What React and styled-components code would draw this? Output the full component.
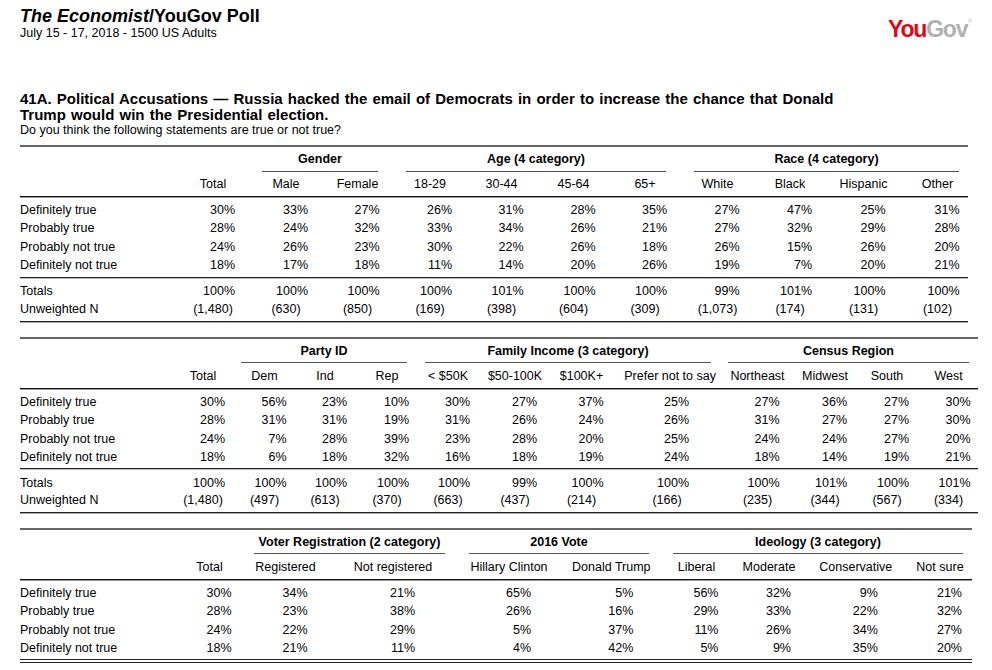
import React from "react";
import styled, { createGlobalStyle } from "styled-components";

const GlobalStyle = createGlobalStyle`
  html, body {
    margin: 0;
    padding: 0;
    background: #fff;
  }
  body {
    font-family: "Liberation Sans", Arial, Helvetica, sans-serif;
    color: #000;
  }
`;

const LEFT = 20;
const ROW_LABELS = ["Definitely true", "Probably true", "Probably not true", "Definitely not true"];

// column centres and rule extents measured from the printed poll
const TABLES = [
  {
    right: 968,
    mt: 8.5,
    cols: [
      ["Total", 213], ["Male", 286], ["Female", 357.5], ["18-29", 430], ["30-44", 501.5],
      ["45-64", 573.5], ["65+", 645], ["White", 717.5], ["Black", 790], ["Hispanic", 863.5], ["Other", 937.5],
    ],
    groups: [
      { label: "Gender", span: 2, x1: 262, x2: 378 },
      { label: "Age (4 category)", span: 4, x1: 406, x2: 666 },
      { label: "Race (4 category)", span: 4, x1: 694, x2: 959 },
    ],
    data: [
      [30, 33, 27, 26, 31, 28, 35, 27, 47, 25, 31],
      [28, 24, 32, 33, 34, 26, 21, 27, 32, 29, 28],
      [24, 26, 23, 30, 22, 26, 18, 26, 15, 26, 20],
      [18, 17, 18, 11, 14, 20, 26, 19, 7, 20, 21],
    ],
    totals: [100, 100, 100, 100, 101, 100, 100, 99, 101, 100, 100],
    n: ["1,480", "630", "850", "169", "398", "604", "309", "1,073", "174", "131", "102"],
  },
  {
    right: 978,
    mt: 14,
    cols: [
      ["Total", 203], ["Dem", 264.5], ["Ind", 325], ["Rep", 387], ["< $50K", 448], ["$50-100K", 515],
      ["$100K+", 581.5], ["Prefer not to say", 667], ["Northeast", 757.5], ["Midwest", 825], ["South", 887], ["West", 948.5],
    ],
    groups: [
      { label: "Party ID", span: 3, x1: 241, x2: 407 },
      { label: "Family Income (3 category)", span: 4, x1: 425, x2: 711 },
      { label: "Census Region", span: 4, x1: 728, x2: 969 },
    ],
    data: [
      [30, 56, 23, 10, 30, 27, 37, 25, 27, 36, 27, 30],
      [28, 31, 31, 19, 31, 26, 24, 26, 31, 27, 27, 30],
      [24, 7, 28, 39, 23, 28, 20, 25, 24, 24, 27, 20],
      [18, 6, 18, 32, 16, 18, 19, 24, 18, 14, 19, 21],
    ],
    totals: [100, 100, 100, 100, 100, 99, 100, 100, 100, 101, 100, 101],
    n: ["1,480", "497", "613", "370", "663", "437", "214", "166", "235", "344", "567", "334"],
  },
  {
    right: 972,
    mt: 13.5,
    cols: [
      ["Total", 209.5], ["Registered", 285.5], ["Not registered", 393], ["Hillary Clinton", 509],
      ["Donald Trump", 611.3], ["Liberal", 696.5], ["Moderate", 769], ["Conservative", 855.8], ["Not sure", 940],
    ],
    groups: [
      { label: "Voter Registration (2 category)", span: 2, x1: 254, x2: 445 },
      { label: "2016 Vote", span: 2, x1: 469, x2: 649 },
      { label: "Ideology (3 category)", span: 4, x1: 673, x2: 963 },
    ],
    data: [
      [30, 34, 21, 65, 5, 56, 32, 9, 21],
      [28, 23, 38, 26, 16, 29, 33, 22, 32],
      [24, 22, 29, 5, 37, 11, 26, 34, 27],
      [18, 21, 11, 4, 42, 5, 9, 35, 20],
    ],
  },
];

const Page = styled.div`
  padding: 7px 20px 0 20px;
  font-size: 12.5px;
`;

const Header = styled.header`
  display: flex;
  justify-content: space-between;
  align-items: flex-start;
`;

const PollTitle = styled.div`
  font-size: 18px;
  font-weight: bold;
  line-height: 19px;
  i {
    font-style: italic;
  }
`;

const PollDate = styled.div`
  font-size: 12.5px;
  line-height: 14px;
`;

const Logo = styled.div`
  margin-top: 11px;
  font-size: 23px;
  line-height: 23px;
  font-weight: bold;
  letter-spacing: -1.2px;
  display: flex;
  align-items: flex-start;
`;

const LogoPart = styled.span`
  color: ${(p) => p.$color};
`;

const Registered = styled.span`
  font-size: 5px;
  line-height: 5px;
  color: #b1b1b1;
  font-weight: normal;
  letter-spacing: 0;
  margin: 1px 0 0 1px;
`;

const Question = styled.section`
  margin-top: 49.5px;
`;

const QTitle = styled.h2`
  margin: 0;
  font-size: 15px;
  line-height: 16px;
  font-weight: bold;
  word-spacing: 1px;
`;

const QSub = styled.div`
  font-size: 12.5px;
  line-height: 14px;
`;

const Grid = styled.div`
  display: grid;
  grid-template-columns: ${(p) => p.$cols};
  width: ${(p) => p.$width}px;
  margin-top: ${(p) => p.$mt}px;
`;

const Rule = styled.div`
  grid-column: 1 / -1;
  height: ${(p) => p.$h}px;
  background: ${(p) => p.$color};
  border-bottom: ${(p) => (p.$under ? `1px solid ${p.$under}` : "none")};
  margin-top: ${(p) => p.$mt || 0}px;
  margin-bottom: ${(p) => p.$mb || 0}px;
`;

const Spacer = styled.div`
  grid-column: span ${(p) => p.$span};
`;

const GroupCell = styled.div`
  grid-column: span ${(p) => p.$span};
  display: flex;
  flex-direction: column;
  padding: 5px ${(p) => p.$pr}px 0 ${(p) => p.$pl}px;
`;

const GroupLabel = styled.div`
  font-weight: bold;
  text-align: center;
  line-height: 15px;
  white-space: nowrap;
`;

const CMidRule = styled.div`
  height: 1px;
  background: #555;
  margin-top: 3.5px;
`;

const HeadCell = styled.div`
  padding: 5.5px ${(p) => p.$pr}px 4px ${(p) => p.$pl}px;
  line-height: 15px;
  text-align: center;
  white-space: nowrap;
`;

const LabelCell = styled.div`
  line-height: ${(p) => p.$lh}px;
  white-space: nowrap;
`;

const NumCell = styled.div`
  line-height: ${(p) => p.$lh}px;
  text-align: right;
  padding-right: ${(p) => p.$pr}px;
  white-space: nowrap;
`;

const CenterCell = styled.div`
  line-height: ${(p) => p.$lh}px;
  text-align: center;
  padding: 0 ${(p) => p.$pr}px 0 ${(p) => p.$pl}px;
  white-space: nowrap;
`;

function layout(table) {
  const c = table.cols.map((col) => col[1]);
  const b = [c[0] - (c[1] - c[0]) / 2];
  for (let i = 1; i < c.length; i++) b.push((c[i - 1] + c[i]) / 2);
  b.push(table.right);
  const widths = c.map((_, i) => b[i + 1] - b[i]);
  const template = [b[0] - LEFT, ...widths].map((w) => `${w}px`).join(" ");
  const cols = c.map((center, i) => {
    const shift = center - (b[i] + b[i + 1]) / 2;
    return {
      pl: Math.max(0, 2 * shift),
      pr: Math.max(0, -2 * shift),
      numPr: b[i + 1] - center - 22,
    };
  });
  let start = 1;
  const groups = table.groups.map((g) => {
    const left = b[start];
    const right = b[start + g.span];
    start += g.span;
    return { ...g, pl: g.x1 - left, pr: right - g.x2 };
  });
  return { template, cols, groups };
}

function PollTable({ table }) {
  const { template, cols, groups } = layout(table);
  const DATA_LH = 18.4;
  const TOT_LH = 17.4;
  return (
    <Grid $cols={template} $width={table.right - LEFT} $mt={table.mt}>
      <Rule $h={2} $color="#666" />

      <Spacer $span={2} />
      {groups.map((g) => (
        <GroupCell key={g.label} $span={g.span} $pl={g.pl} $pr={g.pr}>
          <GroupLabel>{g.label}</GroupLabel>
          <CMidRule />
        </GroupCell>
      ))}

      <HeadCell $pl={0} $pr={0} />
      {table.cols.map(([name], i) => (
        <HeadCell key={name} $pl={cols[i].pl} $pr={cols[i].pr}>
          {name}
        </HeadCell>
      ))}

      <Rule $h={1} $color="#111" $under="#999" $mb={3} />

      {table.data.map((row, r) => (
        <React.Fragment key={ROW_LABELS[r]}>
          <LabelCell $lh={DATA_LH}>{ROW_LABELS[r]}</LabelCell>
          {row.map((v, i) => (
            <NumCell key={i} $lh={DATA_LH} $pr={cols[i].numPr}>
              {v}%
            </NumCell>
          ))}
        </React.Fragment>
      ))}

      {table.totals ? (
        <>
          <Rule $h={1} $color="#222" $under="#bbb" $mt={2} $mb={4.5} />
          <LabelCell $lh={TOT_LH}>Totals</LabelCell>
          {table.totals.map((v, i) => (
            <NumCell key={i} $lh={TOT_LH} $pr={cols[i].numPr}>
              {v}%
            </NumCell>
          ))}
          <LabelCell $lh={TOT_LH}>Unweighted N</LabelCell>
          {table.n.map((v, i) => (
            <CenterCell key={i} $lh={TOT_LH} $pl={cols[i].pl} $pr={cols[i].pr}>
              ({v})
            </CenterCell>
          ))}
          <Rule $h={1} $color="#222" $under="#aaa" $mt={2.8} />
        </>
      ) : (
        <>
          <Rule $h={1} $color="#222" $mt={1.5} />
          <Rule $h={1} $color="#222" $mt={2.3} />
        </>
      )}
    </Grid>
  );
}

export default function App() {
  return (
    <Page>
      <GlobalStyle />
      <Header>
        <div>
          <PollTitle>
            <i>The Economist</i>/YouGov Poll
          </PollTitle>
          <PollDate>July 15 - 17, 2018 - 1500 US Adults</PollDate>
        </div>
        <Logo>
          <LogoPart $color="#e30613">You</LogoPart>
          <LogoPart $color="#b1b1b1">Gov</LogoPart>
          <Registered>®</Registered>
        </Logo>
      </Header>

      <Question>
        <QTitle>
          41A. Political Accusations — Russia hacked the email of Democrats in order to increase the chance that Donald
          <br />
          Trump would win the Presidential election.
        </QTitle>
        <QSub>Do you think the following statements are true or not true?</QSub>
      </Question>

      {TABLES.map((t, i) => (
        <PollTable key={i} table={t} />
      ))}
    </Page>
  );
}
